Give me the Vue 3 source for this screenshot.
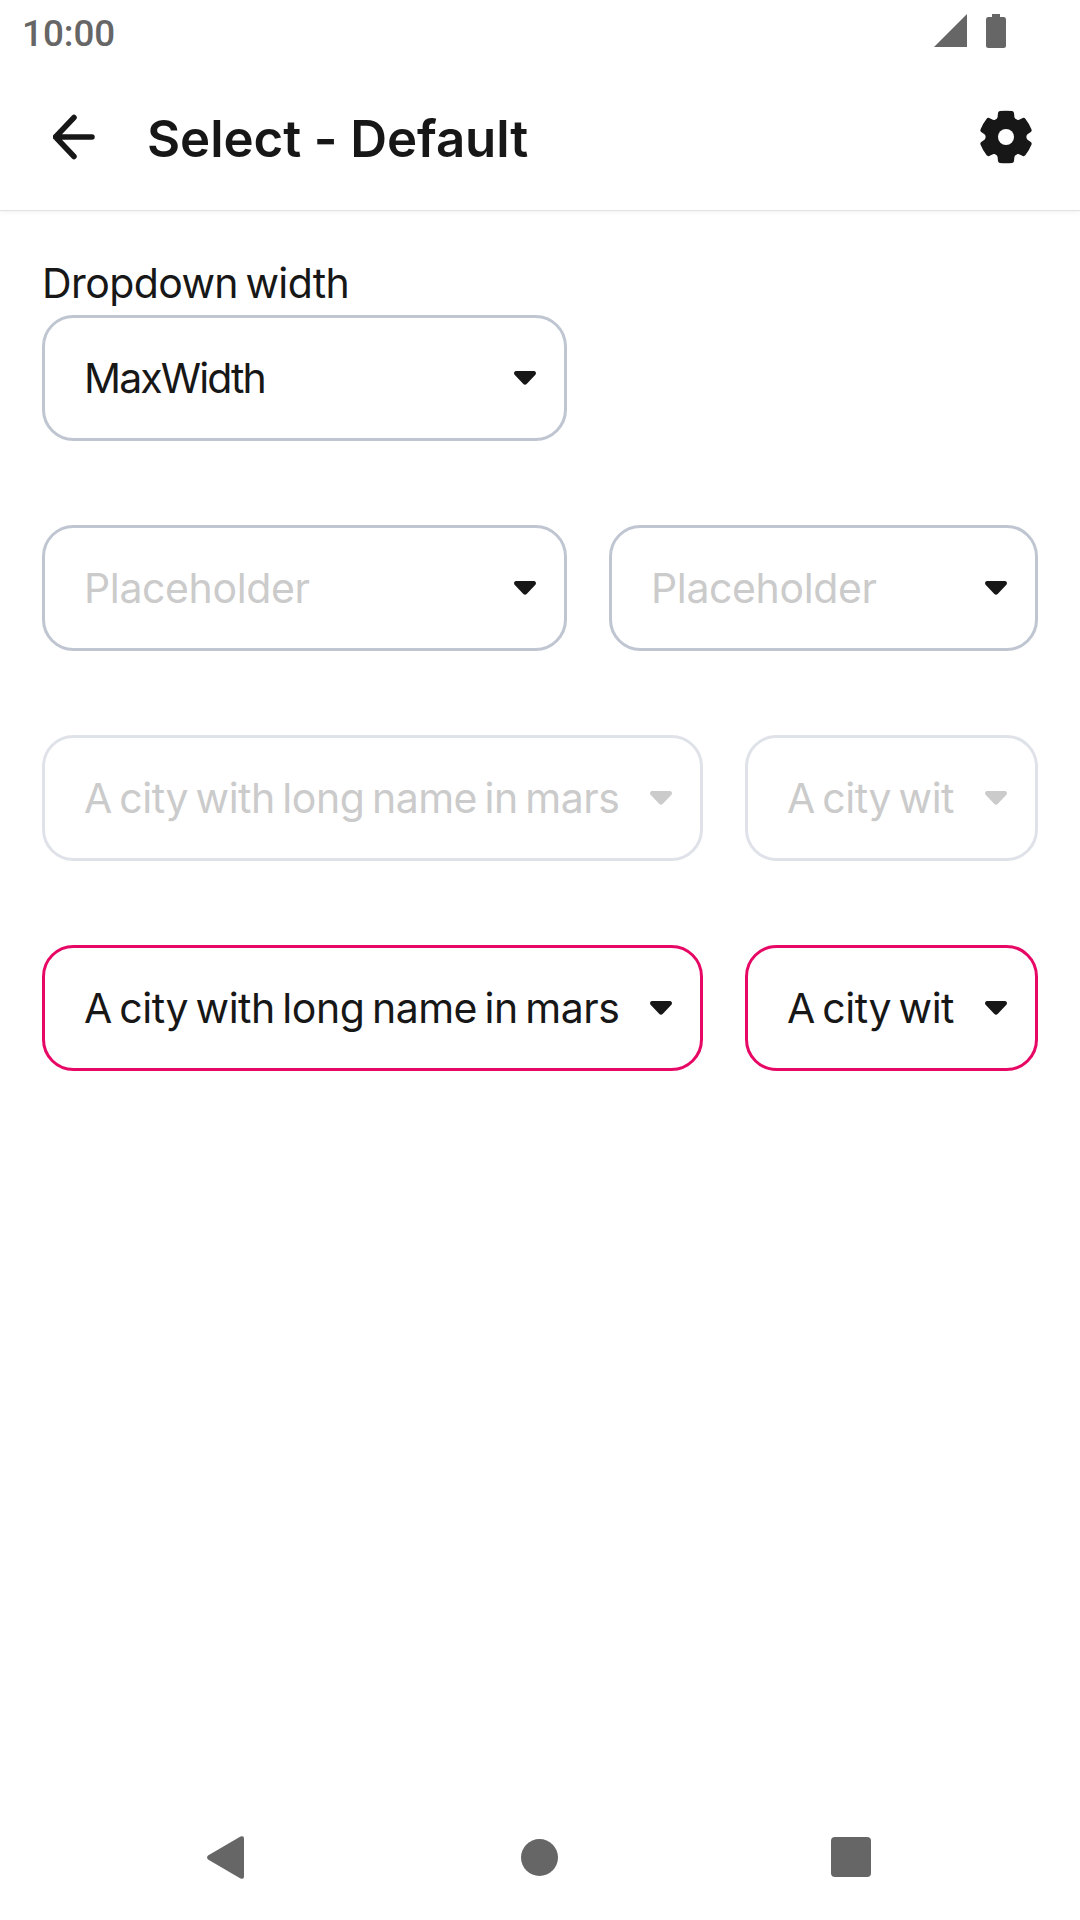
<script setup>
const rows = [
  {
    kind: 'normal',
    label: 'Dropdown width',
    fields: [{ text: 'MaxWidth', tone: 'value', size: 'mid', fit: 'fit-max' }],
  },
  {
    kind: 'normal',
    fields: [
      { text: 'Placeholder', tone: 'hint', size: 'mid', fit: 'fit-place' },
      { text: 'Placeholder', tone: 'hint', size: 'rest', fit: 'fit-place' },
    ],
  },
  {
    kind: 'disabled',
    fields: [
      { text: 'A city with long name in mars', tone: 'hint', size: 'wide', fit: 'fit-city' },
      { text: 'A city wit', tone: 'hint', size: 'rest', fit: 'fit-city' },
    ],
  },
  {
    kind: 'error',
    fields: [
      { text: 'A city with long name in mars', tone: 'value', size: 'wide', fit: 'fit-city' },
      { text: 'A city wit', tone: 'value', size: 'rest', fit: 'fit-city' },
    ],
  },
]
</script>

<template>
  <div class="screen">
    <div class="status">
      <span class="clock">10:00</span>
      <svg class="signal" width="33" height="33" viewBox="0 0 33 33"><path d="M0 33L33 0V33Z" /></svg>
      <svg class="battery" width="20" height="34" viewBox="0 0 20 34"><path d="M6 0H14V3H18Q20 3 20 5.5V31.5Q20 34 17.500 34H2.500Q0 34 0 31.500V5.500Q0 3 2 3H6Z" /></svg>
    </div>
    <header class="bar">
      <svg class="back" width="42" height="46" viewBox="0 0 42 46"><path d="M21 3.500L2.500 23L21 42.500M2.500 23H39" /></svg>
      <h1 class="title">Select - Default</h1>
      <svg class="gear" width="54" height="54" viewBox="-27 -27 54 54">
        <g mask="url(#gear-hole)">
          <circle r="20.500" />
          <path v-for="a in 6" :key="a" :transform="`rotate(${a * 60})`" d="M-12 -15Q-8.700 -17 -8.400 -20L-8 -24Q-7.800 -25.600 -6.200 -25.900Q0 -26.800 6.200 -25.900Q7.800 -25.600 8 -24L8.400 -20Q8.700 -17 12 -15L0 -10Z" />
        </g>
        <mask id="gear-hole"><rect x="-27" y="-27" width="54" height="54" fill="#fff" /><circle r="8" fill="#000" /></mask>
      </svg>
    </header>
    <main class="content">
      <section v-for="(row, i) in rows" :key="i" class="group">
        <div v-if="row.label" class="label">{{ row.label }}</div>
        <div class="row">
          <div v-for="(f, j) in row.fields" :key="j" class="select" :class="[row.kind, f.size]">
            <span class="text" :class="[f.tone, f.fit]">{{ f.text }}</span>
            <svg class="caret" width="22" height="14" viewBox="0 0 21 14" preserveAspectRatio="none"><path d="M2.200 0H18.800Q20.200 0 20.800 1.300Q21.300 2.700 20.200 3.900L12.300 12.800Q10.500 14.600 8.700 12.800L0.800 3.900Q-0.300 2.700 0.200 1.300Q0.800 0 2.200 0Z" /></svg>
          </div>
        </div>
      </section>
    </main>
    <nav class="nav">
      <svg class="nav-back" width="37" height="43" viewBox="0 0 37 43"><path d="M1 19.500L33.500 0.600Q37 -0.800 37 2.500V40.500Q37 43.800 33.500 42.400L1 23.500Q-0.800 21.500 1 19.500Z" /></svg>
      <span class="home"></span>
      <span class="recent"></span>
    </nav>
  </div>
</template>

<style>
body {
  background: #fff;
}
</style>

<style scoped>
.screen {
  display: flex;
  flex-direction: column;
  width: 1080px;
  height: 1920px;
  background: #fff;
  color: #171717;
  font-family: Inter, "Liberation Sans", sans-serif;
}
.status {
  display: flex;
  height: 63px;
  box-sizing: border-box;
  padding: 14px 74px 0 22px;
  color: #666;
}
.status svg,
.nav svg {
  fill: #666;
}
.clock {
  flex: 1;
  font: 500 36.75px/40px Roboto, sans-serif;
}
.battery {
  margin-left: 19px;
}
.bar {
  display: flex;
  align-items: center;
  height: 147px;
  padding: 0 47px 0 53px;
  box-shadow: 0 1px 1px #e3e3e3, 0 2px 6px rgba(0, 0, 0, 0.05);
  clip-path: inset(0 0 -10px 0);
}
.back {
  fill: none;
  stroke: #171717;
  stroke-width: 5.5;
  stroke-linecap: round;
  stroke-linejoin: round;
}
.title {
  flex: 1;
  margin: 4px 0 0 52px;
  font-size: 51px;
  line-height: 60px;
  font-weight: 600;
  letter-spacing: -0.08px;
  white-space: nowrap;
}
.gear {
  fill: #171717;
}
.content {
  flex: 1;
  display: flex;
  flex-direction: column;
  gap: 84px;
  padding: 52px 42px 0;
}
.label {
  height: 53px;
  font-size: 41px;
  line-height: 42px;
  letter-spacing: -0.6px;
  word-spacing: -3.5px;
}
.row {
  display: flex;
  gap: 42px;
}
.select {
  display: flex;
  align-items: center;
  justify-content: space-between;
  box-sizing: border-box;
  height: 126px;
  padding: 0 28px 0 39px;
  border: 3px solid #bfc6d1;
  border-radius: 31.5px;
}
.mid {
  width: 525px;
}
.wide {
  width: 661px;
}
.rest {
  flex: 1;
}
.disabled {
  border-color: #dfe3e9;
}
.error {
  border-color: #e70865;
}
.text {
  font-size: 41px;
  line-height: 50px;
  white-space: nowrap;
}
.fit-max {
  letter-spacing: -1.9px;
}
.fit-place {
  letter-spacing: -0.37px;
}
.fit-city {
  letter-spacing: -0.48px;
  word-spacing: -3.5px;
}
.hint,
.disabled .text {
  color: #cbcbcb;
}
.caret {
  flex: none;
  fill: #171717;
}
.disabled .caret {
  fill: #cbcbcb;
}
.nav {
  display: flex;
  align-items: center;
  justify-content: space-between;
  height: 126px;
  padding: 0 209px 0 207px;
}
.home {
  width: 37px;
  height: 37px;
  margin-left: 4px;
  border-radius: 50%;
  background: #666;
}
.recent {
  width: 40px;
  height: 40px;
  border-radius: 4px;
  background: #666;
}
</style>
